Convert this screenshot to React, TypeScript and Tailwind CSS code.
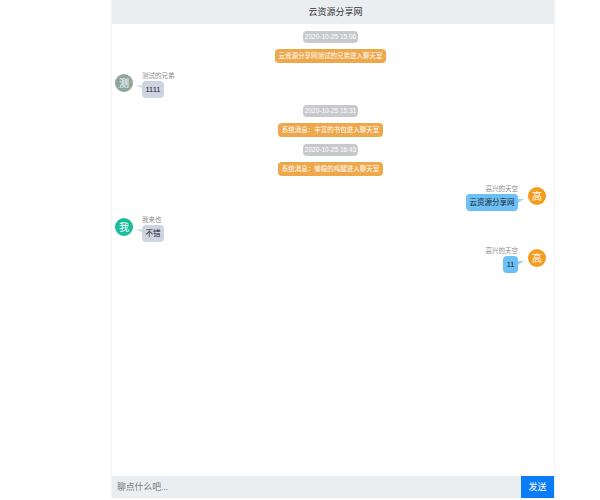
const font = "font-['Liberation_Sans','Noto_Sans_CJK_SC',sans-serif]";

type Item =
  | { type: "time"; text: string; mt: string }
  | { type: "system"; text: string; mt: string }
  | { type: "msg"; side: "left" | "right"; name: string; avatar: string; color: string; text: string; mt: string };

const items: Item[] = [
  { type: "time", text: "2020-10-25 15:06", mt: "mt-[7px]" },
  { type: "system", text: "云资源分享网测试的兄弟进入聊天室", mt: "mt-[6px]" },
  { type: "msg", side: "left", name: "测试的兄弟", avatar: "测", color: "bg-[#8fa69e]", text: "1111", mt: "mt-[8px]" },
  { type: "time", text: "2020-10-25 15:31", mt: "mt-[7px]" },
  { type: "system", text: "系统消息：丰富的书包进入聊天室", mt: "mt-[6px]" },
  { type: "time", text: "2020-10-25 16:43", mt: "mt-[7px]" },
  { type: "system", text: "系统消息：愉稳的鸡腿进入聊天室", mt: "mt-[6px]" },
  { type: "msg", side: "right", name: "高兴的天空", avatar: "高", color: "bg-[#f39c1f]", text: "云资源分享网", mt: "mt-[8px]" },
  { type: "msg", side: "left", name: "我来也", avatar: "我", color: "bg-[#1abc9c]", text: "不错", mt: "mt-[4px]" },
  { type: "msg", side: "right", name: "高兴的天空", avatar: "高", color: "bg-[#f39c1f]", text: "11", mt: "mt-[4px]" },
];

function Message({ item }: { item: Extract<Item, { type: "msg" }> }) {
  const right = item.side === "right";
  return (
    <div className={`flex ${item.mt} ${right ? "flex-row-reverse pr-[8px]" : "pl-[3px]"}`}>
      <div
        className={`mt-[3px] flex h-[18px] w-[18px] items-center justify-center rounded-full text-[10px] text-white ${item.color}`}
      >
        {item.avatar}
      </div>
      <div className={`flex flex-col ${right ? "mr-[10px] items-end" : "ml-[9px] items-start"}`}>
        <div className="h-[10px] text-[6.5px] leading-[10px] text-[#8a8a8a]">{item.name}</div>
        <div
          className={`relative rounded-[4px] px-[3.5px] text-[7.5px] leading-[17px] text-[#1c2430] ${
            right ? "bg-[#6cc0f5]" : "bg-[#ccd5e1]"
          }`}
        >
          {item.text}
          <span
            className={`absolute h-0 w-0 border-t-[4px] ${
              right
                ? "right-[-6px] top-[5px] border-r-[6px] border-t-[#9ad4f8] border-r-transparent"
                : "left-[-6px] top-[4px] border-l-[6px] border-t-[#dde3eb] border-l-transparent"
            }`}
          />
        </div>
      </div>
    </div>
  );
}

export default function App() {
  return (
    <div className={`h-[500px] w-[600px] bg-white ${font}`}>
      <div className="ml-[111px] flex h-[498px] w-[444px] flex-col border-x border-[#f3f4f6]">
        <div className="flex h-[24px] shrink-0 items-center justify-center bg-[#ebeef1] pl-[5px] pt-[2px] text-[9px] text-[#333]">
          云资源分享网
        </div>
        <div className="flex-1 overflow-hidden">
          {items.map((item, i) => {
            if (item.type === "msg") return <Message key={i} item={item} />;
            if (item.type === "time")
              return (
                <div key={i} className={`flex justify-center pr-[5px] ${item.mt}`}>
                  <span className="h-[12px] w-[55px] rounded-[4px] bg-[#c8c9cc] text-center text-[6.5px] leading-[12px] text-white">
                    {item.text}
                  </span>
                </div>
              );
            return (
              <div key={i} className={`flex justify-center pr-[5px] ${item.mt}`}>
                <span className="h-[14px] rounded-[4px] bg-[#eea84c] px-[3.5px] text-[6.5px] leading-[14px] text-white">
                  {item.text}
                </span>
              </div>
            );
          })}
        </div>
        <div className="flex h-[22px] shrink-0 bg-[#ebeef1]">
          <div className="flex flex-1 items-center pl-[5px] pt-[2px] text-[8.8px] text-[#777]">聊点什么吧...</div>
          <button className="w-[33px] bg-[#0a7cf5] pt-[2px] text-[9px] text-white">发送</button>
        </div>
      </div>
    </div>
  );
}
